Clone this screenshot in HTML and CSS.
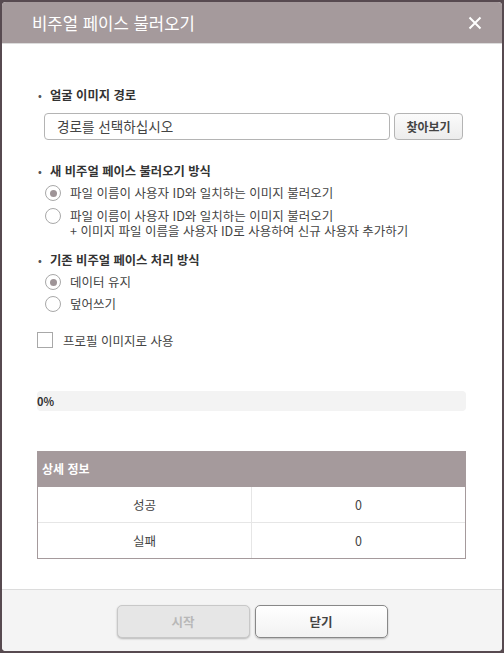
FILE: index.html
```html
<!DOCTYPE html>
<html lang="ko">
<head>
<meta charset="utf-8">
<link rel="stylesheet" href="styles.css">
</head>
<body>
<div class="dialog">
  <div class="header">
    <span class="title">비주얼 페이스 불러오기</span>
    <svg class="close" width="14" height="14" viewBox="0 0 14 14"><path d="M1.5 1.5 L12.5 12.5 M12.5 1.5 L1.5 12.5" stroke="#fff" stroke-width="2" fill="none"/></svg>
  </div>
  <div class="body">
    <div class="section">
      <div class="heading"><span class="dot">•</span>얼굴 이미지 경로</div>
      <div class="pathrow">
        <div class="input">경로를 선택하십시오</div>
        <div class="browse">찾아보기</div>
      </div>
    </div>
    <div class="section s2">
      <div class="heading"><span class="dot">•</span>새 비주얼 페이스 불러오기 방식</div>
      <div class="option"><span class="radio on"></span><span class="label">파일 이름이 사용자 ID와 일치하는 이미지 불러오기</span></div>
      <div class="option o2"><span class="radio"></span><span class="label">파일 이름이 사용자 ID와 일치하는 이미지 불러오기<br>+ 이미지 파일 이름을 사용자 ID로 사용하여 신규 사용자 추가하기</span></div>
    </div>
    <div class="section s3">
      <div class="heading"><span class="dot">•</span>기존 비주얼 페이스 처리 방식</div>
      <div class="option"><span class="radio on"></span><span class="label">데이터 유지</span></div>
      <div class="option"><span class="radio"></span><span class="label">덮어쓰기</span></div>
    </div>
    <div class="check"><span class="box"></span><span class="label">프로필 이미지로 사용</span></div>
    <div class="progress"><span class="pct">0%</span></div>
    <div class="table">
      <div class="thead">상세 정보</div>
      <div class="row"><div class="cell">성공</div><div class="cell">0</div></div>
      <div class="row"><div class="cell">실패</div><div class="cell">0</div></div>
    </div>
  </div>
  <div class="footer">
    <div class="btn disabled">시작</div>
    <div class="btn">닫기</div>
  </div>
</div>
</body>
</html>
```
FILE: styles.css
```css
html, body {
  margin: 0;
  padding: 0;
}
body {
  background: #574a50;
  width: 504px;
  height: 653px;
  padding: 2px;
  box-sizing: border-box;
  font-family: "Noto Sans CJK KR", "Noto Sans", sans-serif;
  color: #333;
}
.dialog {
  width: 500px;
  height: 649px;
  background: #fff;
  border-radius: 4px;
  overflow: hidden;
  display: flex;
  flex-direction: column;
}
.header {
  height: 41px;
  flex: none;
  background: #a59a9c;
  border-bottom: 1px solid #dcdcdc;
  display: flex;
  align-items: center;
  justify-content: space-between;
  padding: 0 20px 0 30px;
}
.title {
  color: #fff;
  font-size: 16.7px;
}
.close {
  display: block;
}
.body {
  flex: 1;
  padding: 42px 36px 0 35px;
}
.section {
  display: flex;
  flex-direction: column;
}
.heading {
  font-size: 12.3px;
  font-weight: bold;
  height: 18px;
  line-height: 18px;
  display: flex;
  align-items: center;
}
.dot {
  width: 12px;
  margin-left: 1px;
  font-size: 10px;
  color: #555;
}
.pathrow {
  display: flex;
  margin-top: 9px;
  margin-left: 7px;
  gap: 4px;
}
.input {
  width: 332px;
  height: 25px;
  border: 1px solid #b4b4b4;
  border-radius: 4px;
  font-size: 13.6px;
  line-height: 25px;
  padding-left: 12px;
  color: #444;
}
.browse {
  width: 67px;
  height: 25px;
  border: 1px solid #b4b4b4;
  border-radius: 4px;
  background: linear-gradient(#fbfbfb, #ececec);
  font-size: 12px;
  font-weight: bold;
  line-height: 25px;
  text-align: center;
  color: #444;
}
.s2 {
  margin-top: 22px;
}
.s3 {
  margin-top: 13px;
}
.option {
  display: flex;
  align-items: flex-start;
  margin-top: 6px;
  margin-left: 8px;
}
.heading + .option {
  margin-top: 5px;
}
.option.o2 {
  margin-top: 7px;
}
.radio {
  width: 16px;
  height: 16px;
  border: 1px solid #a8a8a8;
  border-radius: 50%;
  box-sizing: border-box;
  background: #fff;
  flex: none;
  position: relative;
}
.radio.on::after {
  content: "";
  position: absolute;
  left: 3.5px;
  top: 3.5px;
  width: 7px;
  height: 7px;
  border-radius: 50%;
  background: #9e9497;
}
.label {
  font-size: 12.5px;
  line-height: 15px;
  margin-left: 9px;
  color: #444;
}
.check {
  display: flex;
  align-items: center;
  margin-top: 20px;
}
.box {
  width: 16px;
  height: 16px;
  border: 1px solid #a8a8a8;
  box-sizing: border-box;
  flex: none;
}
.check .label {
  margin-left: 10px;
}
.progress {
  margin-top: 43px;
  width: 429px;
  height: 20px;
  background: #f3f3f3;
  border-radius: 4px;
  display: flex;
  align-items: center;
}
.pct {
  font-size: 11px;
  font-weight: bold;
  color: #333;
}
.table {
  margin-top: 40px;
  width: 429px;
  border: 1px solid #a59a9c;
  border-top: none;
  box-sizing: border-box;
}
.thead {
  height: 36px;
  background: #a59a9c;
  color: #fff;
  font-size: 12px;
  font-weight: bold;
  line-height: 36px;
  padding-left: 5px;
  margin: 0 -1px;
}
.row {
  display: flex;
  height: 35px;
}
.row + .row {
  border-top: 1px solid #e6e6e6;
}
.cell {
  flex: 1;
  font-size: 12.5px;
  color: #444;
  display: flex;
  align-items: center;
  justify-content: center;
}
.cell + .cell {
  border-left: 1px solid #e6e6e6;
}
.footer {
  height: 61px;
  flex: none;
  background: #f4f4f4;
  border-top: 1px solid #dcdcdc;
  display: flex;
  justify-content: center;
  align-items: center;
  gap: 5px;
}
.btn {
  width: 131px;
  height: 31px;
  border: 1px solid #888;
  border-radius: 5px;
  background: linear-gradient(#fff, #f2f2f2);
  box-shadow: 0 1px 2px rgba(0,0,0,0.25);
  font-size: 12.5px;
  font-weight: bold;
  line-height: 31px;
  text-align: center;
  color: #444;
  margin-top: 2px;
}
.btn.disabled {
  background: #e6e6e6;
  border-color: #c8c8c8;
  color: #b8b8b8;
}
```
